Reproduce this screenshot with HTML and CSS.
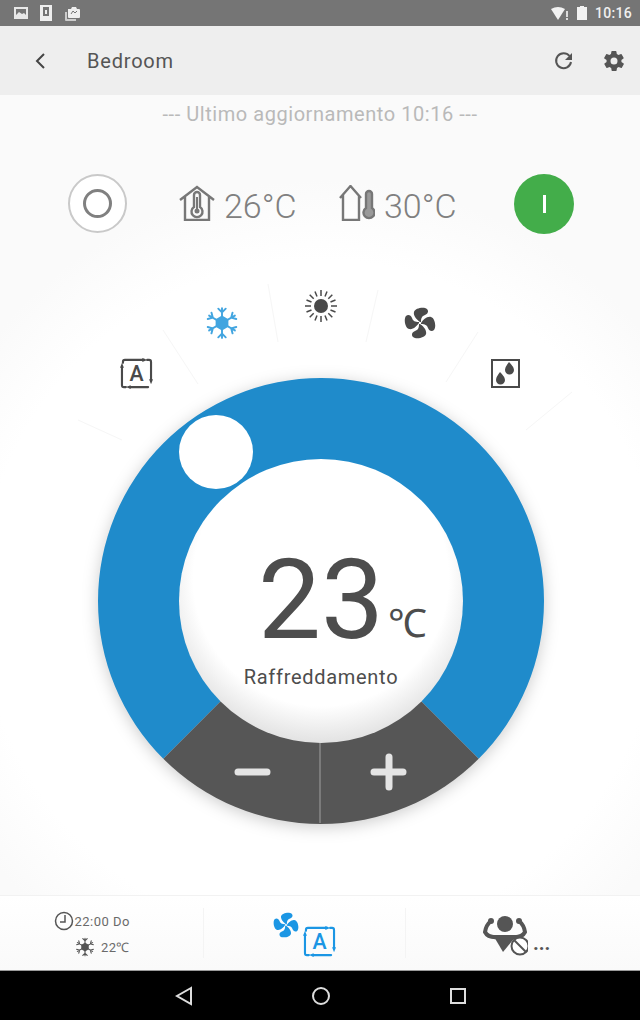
FILE: index.html
```html
<!DOCTYPE html>
<html lang="en">
<head>
    <meta charset="UTF-8">
    <meta name="viewport" content="width=device-width, initial-scale=1.0">
    <title>Bedroom</title>
    <link rel="stylesheet" href="styles.css">
</head>
<body>
    <!-- shared icons -->
    <svg class="icon-defs" width="0" height="0">
        <defs>
            <symbol id="i-auto" viewBox="0 0 34 32">
                <g fill="none" stroke="currentColor" stroke-width="2.200" stroke-linecap="round">
                    <path d="M3 5V4q0-2 2-2h20M28 2h2q2 0 2 2v20M29 30H10M6 30H4q-2 0-2-2V9"/>
                </g>
                <path d="M23 0l5 2-5 2zM30 22l2 5 2-5zM11 28l-5 2 5 2zM0 10l2-5 2 5z" fill="currentColor"/>
                <text x="17" y="24" text-anchor="middle" class="auto-letter" fill="currentColor">A</text>
            </symbol>
            <symbol id="i-fan" viewBox="0 0 32 32">
                <g fill="currentColor">
                    <path id="fan-blade" d="M16 15C13 13 9 9 10 5 11 1 20-.5 23 2c2 2 1 5-2 6-3 1-4 3-4 7z"/>
                    <use href="#fan-blade" transform="rotate(90 16 16)"/>
                    <use href="#fan-blade" transform="rotate(180 16 16)"/>
                    <use href="#fan-blade" transform="rotate(270 16 16)"/>
                </g>
            </symbol>
            <symbol id="i-snow" viewBox="0 0 32 32">
                <g fill="none" stroke="currentColor" stroke-width="1.800" stroke-linecap="round">
                    <path id="snow-arm" d="M16 16V2M12.500 2.500L16 6l3.500-3.500"/>
                    <use href="#snow-arm" transform="rotate(60 16 16)"/>
                    <use href="#snow-arm" transform="rotate(120 16 16)"/>
                    <use href="#snow-arm" transform="rotate(180 16 16)"/>
                    <use href="#snow-arm" transform="rotate(240 16 16)"/>
                    <use href="#snow-arm" transform="rotate(300 16 16)"/>
                </g>
                <path d="M16 9l6 3.500v7L16 23l-6-3.500v-7z" fill="currentColor"/>
            </symbol>
        </defs>
    </svg>

    <div class="status-bar">
        <div class="status-left">
            <svg width="14" height="12" viewBox="0 0 14 12"><path d="M0 0h14v12H0z" fill="#e8e8e8"/><path d="M2 2h10v6H2z" fill="#757575"/><path d="M2 8l3-3 3 2 2-1 2 2z" fill="#e8e8e8"/></svg>
            <svg width="12" height="16" viewBox="0 0 12 16"><path d="M0 0h12v16H0z" fill="#eee"/><path d="M3 2h6v9H3z" fill="#757575"/><path d="M5 5h2v4H5z" fill="#eee"/></svg>
            <svg width="16" height="15" viewBox="0 0 16 15"><path d="M1 6h2v7h9v2H2q-1 0-1-1z" fill="#ccc"/><path d="M4 3h3l1-2h4l1 2h2q1 0 1 1v7q0 1-1 1H5q-1 0-1-1z" fill="#eee"/><path d="M7 8l2-3 2 2 2-2" fill="none" stroke="#757575"/></svg>
        </div>
        <div class="status-right">
            <svg width="18" height="13" viewBox="0 0 18 13"><path d="M0 2q7-4 14 0L7 13z" fill="#f2f2f2"/><path d="M15 4h2v6h-2zM15 11h2v2h-2z" fill="#ddd"/></svg>
            <svg width="10" height="14" viewBox="0 0 10 14"><path d="M3 0h4v1h3v13H0V1h3z" fill="#f2f2f2"/></svg>
            <span class="status-time">10:16</span>
        </div>
    </div>

    <div class="toolbar">
        <svg class="back-icon" width="12" height="18" viewBox="0 0 12 18"><path d="M10 2L3 9l7 7" fill="none" stroke="#444" stroke-width="2"/></svg>
        <span class="toolbar-title">Bedroom</span>
        <svg class="refresh-icon" width="20" height="20" viewBox="0 0 20 20"><path d="M15.500 5A7.500 7.500 0 1 0 17 11" fill="none" stroke="#555" stroke-width="2"/><path d="M18 2v7h-7z" fill="#555"/></svg>
        <svg class="gear-icon" width="24" height="24" viewBox="0 0 24 24"><path fill="#555" fill-rule="evenodd" d="M19.400 13a7.500 7.500 0 0 0 0-2l2.100-1.600a.5.500 0 0 0 .1-.6l-2-3.500a.5.500 0 0 0-.6-.2l-2.500 1a7.300 7.300 0 0 0-1.700-1l-.4-2.700a.5.500 0 0 0-.5-.4h-4a.5.500 0 0 0-.5.400l-.4 2.700a7.300 7.300 0 0 0-1.700 1l-2.500-1a.5.500 0 0 0-.6.200l-2 3.500a.5.500 0 0 0 .1.600L4.600 11a7.500 7.500 0 0 0 0 2l-2.100 1.600a.5.500 0 0 0-.1.600l2 3.500a.5.500 0 0 0 .6.200l2.500-1a7.300 7.300 0 0 0 1.700 1l.4 2.700a.5.500 0 0 0 .5.400h4a.5.500 0 0 0 .5-.4l.4-2.700a7.300 7.300 0 0 0 1.700-1l2.500 1a.5.500 0 0 0 .6-.2l2-3.500a.5.500 0 0 0-.1-.6zM12 15.500a3.500 3.500 0 1 1 0-7 3.500 3.500 0 0 1 0 7z"/></svg>
    </div>

    <div class="content">
        <p class="updated">--- Ultimo aggiornamento 10:16 ---</p>

        <div class="readings">
            <div class="power-off"><span class="power-off-inner"></span></div>
            <div class="reading reading-indoor">
                <svg width="36" height="36" viewBox="0 0 36 36">
                    <path d="M1 15L18 2l17 13M6 12v23h24V12" fill="none" stroke="#777" stroke-width="2.400"/>
                    <path d="M15 10a3 3 0 0 1 6 0v12a5.500 5.500 0 1 1-6 0z" fill="none" stroke="#777" stroke-width="2.400"/>
                    <circle cx="18" cy="26" r="2.500" fill="#777"/><path d="M17 12h2v13h-2z" fill="#777"/>
                </svg>
                <span class="reading-value">26°C</span>
            </div>
            <div class="reading reading-outdoor">
                <svg width="36" height="36" viewBox="0 0 36 36">
                    <path d="M1 13L11.500 1 22 13M4 10v25h16V10" fill="none" stroke="#777" stroke-width="2.400"/>
                    <path d="M27 9a3 3 0 0 1 6 0v14a5.500 5.500 0 1 1-6 0z" fill="#9a9a9a" stroke="#777" stroke-width="2.400"/>
                </svg>
                <span class="reading-value">30°C</span>
            </div>
            <div class="power-on"><span class="power-on-bar"></span></div>
        </div>

        <div class="dial-stage">
            <!-- viewBox uses window coordinates so the arc maths stays readable -->
            <svg class="dial-svg" width="640" height="644" viewBox="0 250 640 644">
                <defs>
                    <radialGradient id="inner-shade" cx="50%" cy="42%" r="60%">
                        <stop offset="0.75" stop-color="#fff"/>
                        <stop offset="1" stop-color="#dedede"/>
                    </radialGradient>
                </defs>

                <!-- faint spokes between the modes -->
                <path class="spokes" d="M78 420L122 440M163 330L198 384M268 284L278 342M378 290L366 342M478 332L446 382M572 392L526 430"/>

                <g class="mode-icons">
                    <use href="#i-auto" class="mode-dark" x="120" y="358" width="33" height="31"/>
                    <use href="#i-snow" class="mode-active" x="205" y="306" width="34" height="34"/>
                    <g class="mode-dark">
                        <circle cx="321" cy="306" r="7"/>
                        <path class="sun-rays" d="M321 290v6M321 316v6M305 306h6M331 306h6M309.700 294.700l4 4M328.300 313.300l4 4M309.700 317.300l4-4M328.300 298.700l4-4M315 291.500l2 5M325 315.500l2 5M306.500 312l5-2M330.500 302l5-2M315 320.500l2-5M325 296.500l2-5M306.500 300l5 2M330.500 310l5 2"/>
                    </g>
                    <use href="#i-fan" class="mode-dark" x="404" y="307" width="32" height="32"/>
                    <g class="mode-dark">
                        <rect class="dry-box" x="492" y="360" width="27" height="27"/>
                        <path d="M509 362q5 5 5 8a4.500 4.500 0 0 1-9 0q0-3 4-8zM500 372q5 5 5 8a4.500 4.500 0 0 1-9 0q0-3 4-8z"/>
                    </g>
                </g>

                <g class="dial-ring">
                    <path class="ring-blue" d="M163.300 758.700A223 223 0 1 1 478.700 758.700L321 601z"/>
                    <path class="ring-dark" d="M163.300 758.700A223 223 0 0 0 478.700 758.700L321 601z"/>
                </g>
                <path class="ring-divider" d="M320 740V823"/>
                <circle cx="321" cy="601" r="142" fill="url(#inner-shade)"/>
                <circle class="thumb" cx="216" cy="452" r="37"/>

                <path class="step-sign" d="M238 772h29M374 772h29M389 757v30"/>
            </svg>

            <div class="dial-readout">
                <div class="setpoint"><span class="setpoint-value">23</span><span class="setpoint-unit">℃</span></div>
                <div class="mode-label">Raffreddamento</div>
            </div>
        </div>
    </div>

    <div class="bottom-bar">
        <div class="bottom-cell schedule">
            <div class="schedule-row">
                <svg width="20" height="20" viewBox="0 0 20 20"><circle cx="10" cy="10" r="8.500" fill="none" stroke="#555" stroke-width="1.500"/><path d="M11 4v7H6" fill="none" stroke="#555" stroke-width="1.500"/></svg>
                <span>22:00 Do</span>
            </div>
            <div class="schedule-row schedule-temp">
                <svg class="small-snow" width="20" height="20"><use href="#i-snow"/></svg>
                <span>22℃</span>
            </div>
        </div>
        <div class="bottom-cell fan-mode">
            <svg class="fan-small" width="26" height="26"><use href="#i-fan"/></svg>
            <svg class="auto-small" width="33" height="31"><use href="#i-auto"/></svg>
        </div>
        <div class="bottom-cell eco">
            <svg width="50" height="42" viewBox="0 0 50 42">
                <circle cx="27" cy="8" r="8" fill="#555"/>
                <path d="M20 21Q10 22 7 16 8 9 13 5M34 21Q44 22 47 16 46 9 41 5" fill="none" stroke="#555" stroke-width="4" stroke-linecap="round"/>
                <circle cx="13" cy="5" r="3" fill="#555"/>
                <circle cx="41" cy="5" r="3" fill="#555"/>
                <path d="M15 19H39L25 36z" fill="#555"/>
                <circle cx="42" cy="30" r="8.500" fill="#fff" stroke="#555" stroke-width="2"/>
                <path d="M36 24l12 12" stroke="#555" stroke-width="2"/>
            </svg>
            <span class="eco-more">...</span>
        </div>
    </div>

    <div class="nav-bar">
        <svg width="18" height="20" viewBox="0 0 18 20"><path d="M16 2L2 10l14 8z" fill="none" stroke="#ddd" stroke-width="2"/></svg>
        <svg width="20" height="20" viewBox="0 0 20 20"><circle cx="10" cy="10" r="8" fill="none" stroke="#ddd" stroke-width="2"/></svg>
        <svg width="18" height="18" viewBox="0 0 18 18"><path d="M2 2h14v14H2z" fill="none" stroke="#ddd" stroke-width="2"/></svg>
    </div>
</body>
</html>
```

FILE: styles.css
```css
* {
    box-sizing: border-box;
}
body {
    margin: 0;
    width: 640px;
    height: 1020px;
    overflow: hidden;
    display: flex;
    flex-direction: column;
    font-family: Roboto, "Liberation Sans", sans-serif;
    background: #fff;
}
.icon-defs {
    position: absolute;
}
.auto-letter {
    font-family: Roboto, sans-serif;
    font-size: 22px;
    font-weight: 500;
}

/* top bars */
.status-bar {
    height: 26px;
    background: #757575;
    display: flex;
    justify-content: space-between;
    align-items: center;
    padding: 0 8px 0 14px;
}
.status-left {
    display: flex;
    align-items: center;
    gap: 12px;
}
.status-right {
    display: flex;
    align-items: center;
    gap: 8px;
}
.status-time {
    font-size: 14px;
    font-weight: 500;
    color: #f0f0f0;
    letter-spacing: 0.3px;
}
.toolbar {
    height: 69px;
    background: #eeeeee;
    display: flex;
    align-items: center;
    padding: 0 14px 0 34px;
}
.toolbar-title {
    font-size: 20px;
    color: #555;
    margin-left: 41px;
    letter-spacing: 0.8px;
    flex: 1;
}
.gear-icon {
    margin-left: 28px;
}

/* main area */
.content {
    flex: 1;
    background: radial-gradient(circle at 321px 505px, #fff 0, #fff 340px, #fafafa 420px);
}
.updated {
    margin: 0;
    padding-top: 7px;
    height: 38px;
    text-align: center;
    font-size: 20px;
    letter-spacing: 0.55px;
    color: #b9b9b9;
}
.readings {
    height: 117px;
    display: flex;
    align-items: center;
    padding: 24px 0 0 68px;
}
.power-off {
    width: 59px;
    height: 59px;
    border-radius: 50%;
    background: #fff;
    border: 2px solid #c9c9c9;
    display: flex;
    align-items: center;
    justify-content: center;
}
.power-off-inner {
    width: 29px;
    height: 29px;
    border-radius: 50%;
    border: 3px solid #808080;
}
.reading {
    display: flex;
    align-items: center;
    gap: 9px;
    color: #808080;
}
.reading svg {
    margin-top: -2px;
}
.reading-value {
    font-size: 34px;
    font-weight: 300;
    margin-top: 5px;
}
.reading-indoor {
    margin-left: 52px;
    width: 160px;
}
.reading-outdoor {
    width: 175px;
}
.power-on {
    width: 60px;
    height: 60px;
    border-radius: 50%;
    background: #43ad4a;
    display: flex;
    align-items: center;
    justify-content: center;
}
.power-on-bar {
    width: 3px;
    height: 18px;
    background: #fff;
}

/* thermostat dial */
.dial-stage {
    position: relative;
    height: 645px;
}
.dial-svg {
    display: block;
}
.spokes {
    fill: none;
    stroke: #f6f6f6;
    stroke-width: 1;
}
.mode-dark {
    color: #4a4a4a;
    fill: #4a4a4a;
}
.mode-active {
    color: #42a5e0;
}
.sun-rays {
    fill: none;
    stroke: #4a4a4a;
    stroke-width: 1.500;
}
.dry-box {
    fill: #fff;
    stroke: #4a4a4a;
    stroke-width: 2;
}
.dial-ring {
    filter: drop-shadow(0 3px 8px rgba(0, 0, 0, 0.2));
}
.ring-blue {
    fill: #1f8bcb;
}
.ring-dark {
    fill: #565656;
}
.ring-divider {
    stroke: #7b7b7b;
    stroke-width: 2;
}
.thumb {
    fill: #fff;
}
.step-sign {
    fill: none;
    stroke: #e4e4e4;
    stroke-width: 7;
    stroke-linecap: round;
}
.dial-readout {
    position: absolute;
    left: 179px;
    top: 210px;
    width: 284px;
    height: 284px;
    display: flex;
    flex-direction: column;
    align-items: center;
    color: #4d4d4d;
}
.setpoint {
    display: flex;
    align-items: flex-end;
    margin-top: 79px;
    height: 122px;
    padding-left: 43px;
}
.setpoint-value {
    font-size: 112px;
    font-weight: 400;
    line-height: 122px;
}
.setpoint-unit {
    font-size: 39px;
    font-weight: 300;
    line-height: 74px;
    margin-left: 4px;
}
.mode-label {
    margin-top: 4px;
    font-size: 20px;
    letter-spacing: 0.7px;
    color: #4d4d4d;
}

/* bottom strip */
.bottom-bar {
    height: 76px;
    display: grid;
    grid-template-columns: 204px 202px 234px;
    align-items: center;
    border-top: 1px solid #f2f2f2;
    border-bottom: 1px solid #9a9a9a;
    background: linear-gradient(#fff, #fafafa);
}
.bottom-cell {
    height: 50px;
    border-right: 1px solid #f4f4f4;
}
.bottom-cell:last-child {
    border-right: none;
}
.schedule {
    display: flex;
    flex-direction: column;
    align-items: flex-end;
    padding-top: 3px;
    padding-right: 73px;
    font-size: 13px;
    letter-spacing: 0.5px;
    color: #6a6a6a;
    gap: 6px;
}
.schedule-row {
    display: flex;
    align-items: center;
    height: 20px;
}
.schedule-temp {
    gap: 6px;
}
.small-snow {
    color: #555;
}
.fan-mode {
    position: relative;
}
.fan-small {
    position: absolute;
    left: 69px;
    top: 4px;
    color: #1b96e4;
}
.auto-small {
    position: absolute;
    left: 99px;
    top: 18px;
    color: #1b96e4;
}
.eco {
    display: flex;
    align-items: flex-end;
    padding-left: 72px;
    color: #555;
}
.eco-more {
    font-size: 20px;
    font-weight: 700;
    line-height: 18px;
    margin: 0 0 6px 5px;
}

/* android navigation */
.nav-bar {
    height: 49px;
    background: #000;
    display: flex;
    align-items: center;
    padding-left: 175px;
    gap: 118px;
}
```
